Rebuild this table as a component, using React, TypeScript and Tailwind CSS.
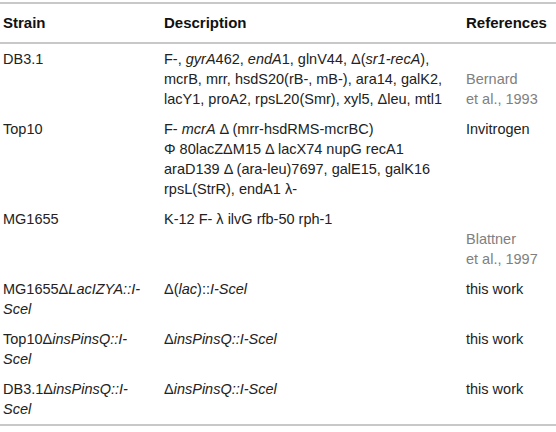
const font = { fontFamily: '"Liberation Sans", Arial, sans-serif' };

function Line({ children }: { children: React.ReactNode }) {
  return <span className="block whitespace-nowrap">{children}</span>;
}

export default function App() {
  return (
    <div className="w-[556px] h-[432px] bg-white pt-[2px]" style={font}>
      <table className="w-full table-fixed border-collapse text-[14.5px] leading-[20px] text-[#222]">
        <colgroup>
          <col className="w-[163px]" />
          <col className="w-[302px]" />
          <col />
        </colgroup>
        <thead>
          <tr className="border-y-2 border-[#c8c8c8] text-left text-[15px]">
            <th className="py-[9px] pl-[3px] font-bold text-[#111]">Strain</th>
            <th className="py-[9px] pl-[1px] font-bold text-[#111]">Description</th>
            <th className="py-[9px] pl-[1px] font-bold text-[#111]">References</th>
          </tr>
        </thead>
        <tbody className="align-top">
          <tr>
            <td className="py-[5px] pl-[3px]">DB3.1</td>
            <td className="py-[5px] pl-[1px]">
              <Line>
                F-, <i>gyrA</i>462, <i>endA</i>1, glnV44, Δ(<i>sr1-recA</i>),
              </Line>
              <Line>mcrB, mrr, hsdS20(rB-, mB-), ara14, galK2,</Line>
              <Line>lacY1, proA2, rpsL20(Smr), xyl5, Δleu, mtl1</Line>
            </td>
            <td className="py-[5px] pl-[1px] pt-[25px] text-[#808080]">
              <Line>Bernard</Line>
              <Line>et al., 1993</Line>
            </td>
          </tr>
          <tr>
            <td className="py-[5px] pl-[3px]">Top10</td>
            <td className="py-[5px] pl-[1px]">
              <Line>
                F- <i>mcrA</i> Δ (mrr-hsdRMS-mcrBC)
              </Line>
              <Line>Φ 80lacZΔM15 Δ lacX74 nupG recA1</Line>
              <Line>araD139 Δ (ara-leu)7697, galE15, galK16</Line>
              <Line>rpsL(StrR), endA1 λ-</Line>
            </td>
            <td className="py-[5px] pl-[1px]">Invitrogen</td>
          </tr>
          <tr>
            <td className="py-[5px] pl-[3px]">MG1655</td>
            <td className="py-[5px] pl-[1px]">K-12 F- λ ilvG rfb-50 rph-1</td>
            <td className="py-[5px] pl-[1px] pt-[25px] text-[#808080]">
              <Line>Blattner</Line>
              <Line>et al., 1997</Line>
            </td>
          </tr>
          <tr>
            <td className="py-[5px] pl-[3px]">
              <Line>
                MG1655Δ<i>LacIZYA::I-</i>
              </Line>
              <Line>
                <i>Scel</i>
              </Line>
            </td>
            <td className="py-[5px] pl-[1px]">
              Δ(<i>lac</i>)::<i>I-Scel</i>
            </td>
            <td className="py-[5px] pl-[1px]">this work</td>
          </tr>
          <tr>
            <td className="py-[5px] pl-[3px]">
              <Line>
                Top10Δ<i>insPinsQ::I-</i>
              </Line>
              <Line>
                <i>Scel</i>
              </Line>
            </td>
            <td className="py-[5px] pl-[1px]">
              Δ<i>insPinsQ::I-Scel</i>
            </td>
            <td className="py-[5px] pl-[1px]">this work</td>
          </tr>
          <tr className="border-b-2 border-[#c8c8c8]">
            <td className="py-[5px] pl-[3px]">
              <Line>
                DB3.1Δ<i>insPinsQ::I-</i>
              </Line>
              <Line>
                <i>Scel</i>
              </Line>
            </td>
            <td className="py-[5px] pl-[1px]">
              Δ<i>insPinsQ::I-Scel</i>
            </td>
            <td className="py-[5px] pl-[1px]">this work</td>
          </tr>
        </tbody>
      </table>
    </div>
  );
}
